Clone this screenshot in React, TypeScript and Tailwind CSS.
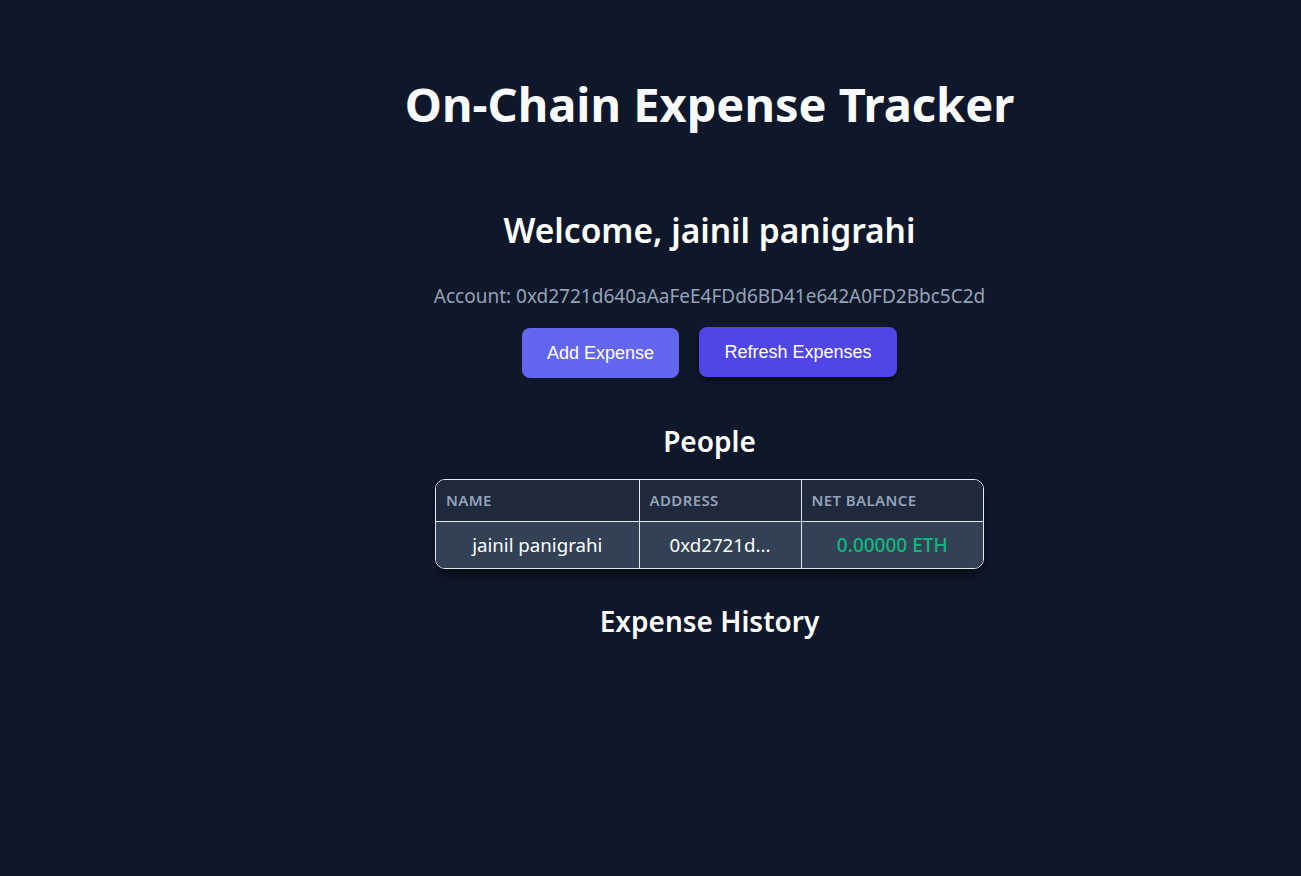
const people = [
  { name: "jainil panigrahi", address: "0xd2721d...", balance: "0.00000 ETH" },
];

export default function App() {
  return (
    <div className="min-h-screen bg-[#0f172a] flex flex-col items-center pl-[118px] text-white font-['Noto_Sans',sans-serif]">
      <h1 className="mt-[75px] text-[47px] leading-[58px] font-bold text-[#f8fafc]">On-Chain Expense Tracker</h1>

      <h2 className="mt-[77px] text-[33.5px] leading-[40px] font-semibold">Welcome, jainil panigrahi</h2>
      <p className="mt-[34px] text-[19px] leading-[24px] text-[#94a3b8]">
        Account: 0xd2721d640aAaFeE4FDd6BD41e642A0FD2Bbc5C2d
      </p>

      <div className="mt-[19px] flex items-start gap-5 font-['Liberation_Sans',Arial,sans-serif]">
        <button className="mt-px w-[157px] h-[50px] rounded-lg bg-[#6366f1] text-[18px] text-white">Add Expense</button>
        <button className="w-[198px] h-[50px] rounded-lg bg-[#4f46e5] text-[18px] text-white shadow-md shadow-black/40">
          Refresh Expenses
        </button>
      </div>

      <h3 className="mt-[46px] text-[28px] leading-[34px] font-semibold">People</h3>

      <div className="mt-[21px] w-[549px] rounded-[10px] overflow-hidden border border-[#e2e8f0] shadow-lg shadow-black/40">
        <table className="w-full border-collapse">
          <thead>
            <tr className="bg-[#1e293b] h-[41px]">
              <th className="w-[203px] px-[10px] text-left text-[15px] font-semibold tracking-wide uppercase text-[#94a3b8] border-r border-[#e2e8f0]">Name</th>
              <th className="w-[162px] px-[10px] text-left text-[15px] font-semibold tracking-wide uppercase text-[#94a3b8] border-r border-[#e2e8f0]">Address</th>
              <th className="px-[10px] text-left text-[15px] font-semibold tracking-wide uppercase text-[#94a3b8]">Net Balance</th>
            </tr>
          </thead>
          <tbody>
            {people.map((p) => (
              <tr key={p.address} className="bg-[#334155] h-[47px] border-t border-[#e2e8f0]">
                <td className="text-center text-[18.7px] border-r border-[#e2e8f0]">{p.name}</td>
                <td className="text-center text-[18.7px] border-r border-[#e2e8f0]">{p.address}</td>
                <td className="text-center text-[19px] font-medium text-[#10b981]">{p.balance}</td>
              </tr>
            ))}
          </tbody>
        </table>
      </div>

      <h3 className="mt-[35px] text-[28px] leading-[34px] font-semibold">Expense History</h3>
    </div>
  );
}
